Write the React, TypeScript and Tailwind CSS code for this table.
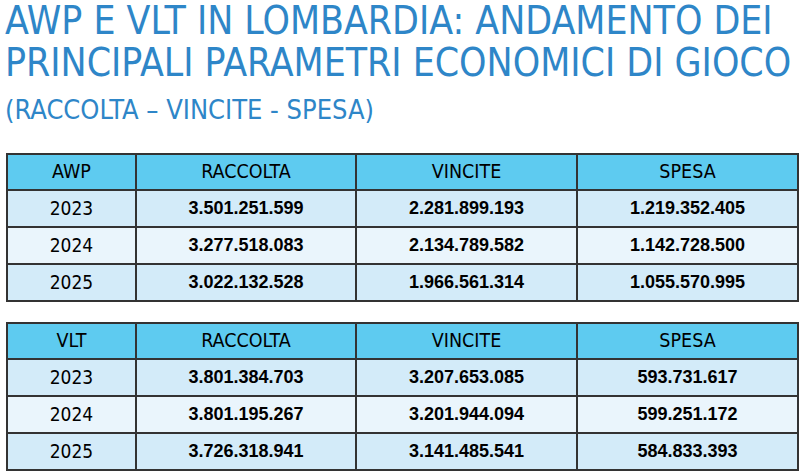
const awp = [
  { y: '2023', r: '3.501.251.599', v: '2.281.899.193', s: '1.219.352.405' },
  { y: '2024', r: '3.277.518.083', v: '2.134.789.582', s: '1.142.728.500' },
  { y: '2025', r: '3.022.132.528', v: '1.966.561.314', s: '1.055.570.995' },
];

const vlt = [
  { y: '2023', r: '3.801.384.703', v: '3.207.653.085', s: '593.731.617' },
  { y: '2024', r: '3.801.195.267', v: '3.201.944.094', s: '599.251.172' },
  { y: '2025', r: '3.726.318.941', v: '3.141.485.541', s: '584.833.393' },
];

const label = "font-['DejaVu_Sans_Condensed',sans-serif]";
const num = "font-['Liberation_Sans',Arial,sans-serif] font-bold text-[18px]";

function DataTable({ name, rows }: { name: string; rows: typeof awp }) {
  return (
    <table className="w-[791px] ml-[6px] border-collapse table-fixed text-center text-black">
      <colgroup>
        <col className="w-[129px]" />
        <col className="w-[220px]" />
        <col className="w-[221px]" />
        <col className="w-[221px]" />
      </colgroup>
      <thead>
        <tr className={`bg-[#5ecbf0] h-[36px] text-[19.5px] ${label}`}>
          {[name, 'RACCOLTA', 'VINCITE', 'SPESA'].map((h) => (
            <th key={h} className="border-2 border-[#333] font-normal p-0">{h}</th>
          ))}
        </tr>
      </thead>
      <tbody>
        {rows.map((row, i) => (
          <tr key={row.y} className={`h-[37px] ${i === 1 ? 'bg-[#eaf5fc]' : 'bg-[#d3ebf9]'}`}>
            <td className={`border-2 border-[#333] text-[19px] p-0 ${label}`}>{row.y}</td>
            <td className={`border-2 border-[#333] p-0 ${num}`}>{row.r}</td>
            <td className={`border-2 border-[#333] p-0 ${num}`}>{row.v}</td>
            <td className={`border-2 border-[#333] p-0 ${num}`}>{row.s}</td>
          </tr>
        ))}
      </tbody>
    </table>
  );
}

export default function App() {
  return (
    <div className="w-[800px] h-[474px] bg-white overflow-hidden">
      <div className={`pl-[5px] text-[#2e86c8] ${label}`}>
        <h1 className="text-[38.8px] leading-[42px] font-normal whitespace-nowrap">
          AWP E VLT IN LOMBARDIA: ANDAMENTO DEI
          <br />
          PRINCIPALI PARAMETRI ECONOMICI DI GIOCO
        </h1>
        <p className="mt-[9px] text-[27px] leading-[34px] whitespace-nowrap">(RACCOLTA – VINCITE - SPESA)</p>
      </div>
      <div className="mt-[26px]">
        <DataTable name="AWP" rows={awp} />
      </div>
      <div className="mt-[20px]">
        <DataTable name="VLT" rows={vlt} />
      </div>
    </div>
  );
}
